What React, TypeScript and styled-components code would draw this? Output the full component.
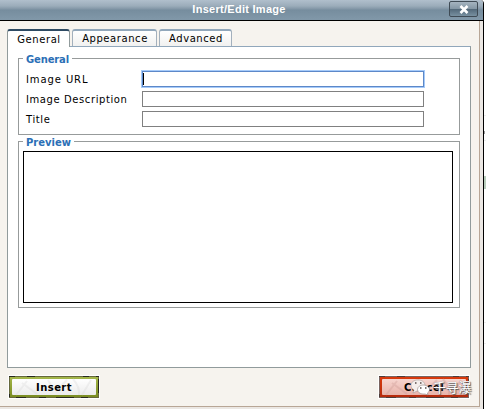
import React from 'react';
import styled, { createGlobalStyle } from 'styled-components';

const Global = createGlobalStyle`
  * { box-sizing: border-box; }
  body { margin: 0; background: #fff; overflow: hidden; }
`;

const Screen = styled.div`
  width: 486px;
  height: 409px;
  display: flex;
  background: #fff;
  overflow: hidden;
  font: 10px/12px 'DejaVu Sans', Verdana, sans-serif;
  color: #000;
`;

const Dialog = styled.div`
  width: 484px;
  height: 409px;
  display: flex;
  flex-direction: column;
  border-right: 1px solid #000;
  border-top-right-radius: 4px;
  background: #ebe7e3;
`;

const Outside = styled.div`
  width: 2px;
  height: 409px;
  background: linear-gradient(#eee, #eee) 0 115px / 2px 1px no-repeat,
    linear-gradient(#999, #999) 0 131px / 1px 3px no-repeat,
    linear-gradient(#eee, #eee) 0 140px / 2px 1px no-repeat,
    linear-gradient(#b9cdbc, #b9cdbc) 0 176px / 2px 13px no-repeat,
    linear-gradient(#eee, #eee) 0 322px / 2px 1px no-repeat,
    linear-gradient(#eee, #eee) 0 343px / 2px 1px no-repeat;
`;

const TitleBar = styled.header`
  height: 21px;
  flex: none;
  display: grid;
  grid-template-columns: 35px 1fr 35px;
  align-items: start;
  border-bottom: 1px solid #000;
  border-top-right-radius: 3px;
  background: linear-gradient(#b0bfcc 0, #9bacba 6px, #8296a6 9px, #768d9e 10px, #8097a8 19px);
`;

const Title = styled.h1`
  grid-column: 2;
  margin: 2px 0 0;
  padding-right: 5px;
  text-align: center;
  font: bold 11px/14px 'Liberation Sans', Arial, sans-serif;
  letter-spacing: 0.28px;
  color: #fff;
`;

const CloseButton = styled.button`
  width: 29px;
  height: 16px;
  margin: 1px 0 0 1px;
  padding: 0;
  display: flex;
  align-items: center;
  justify-content: center;
  border: 1px solid #3f4b55;
  border-radius: 2px;
  background: linear-gradient(#a5b4c0 0, #8497a5 48%, #53697a 52%, #7890a0 100%);
`;

const Body = styled.div`
  width: 480px;
  height: 386px;
  padding: 8px 8px 0 7px;
  border-right: 1px solid #b8a696;
  border-bottom: 1px solid #b8a696;
  background: #f6f3ee;
`;

const Tabs = styled.nav`
  display: flex;
  gap: 2px;
  height: 17px;
`;

const Tab = styled.button<{ $active?: boolean; $width: number }>`
  width: ${p => p.$width}px;
  height: ${p => (p.$active ? 18 : 17)}px;
  position: relative;
  z-index: 1;
  padding: 1px 0 0 1px;
  border: 1px solid ${p => (p.$active ? '#919b9c' : '#a3b0bd')};
  border-top: ${p => (p.$active ? '2px solid #2d4a63' : '2px solid #91a7bb')};
  border-bottom: 0;
  border-radius: 3px 3px 0 0;
  background: ${p => (p.$active ? '#fff' : 'linear-gradient(#fff, #f1f1f0)')};
  font: inherit;
  letter-spacing: 0.57px;
  text-align: center;
  color: #000;
`;

const Panel = styled.main`
  width: 464px;
  height: 322px;
  padding: 11px 10px 0;
  border: 1px solid #919b9c;
  border-top-color: #91a7bb;
  background: #fff;
`;

const Group = styled.section<{ $height: number }>`
  width: 442px;
  height: ${p => p.$height}px;
  border: 1px solid #979b9b;
  & + & { margin-top: 6px; }
`;

const Legend = styled.h2<{ $width: number; $spacing: number }>`
  width: ${p => p.$width}px;
  height: 12px;
  margin: -6px 0 0 4px;
  padding-left: 3px;
  background: #fff;
  font: bold 10px/13px 'DejaVu Sans', Verdana, sans-serif;
  letter-spacing: ${p => p.$spacing}px;
  white-space: nowrap;
  color: #2b6fb6;
`;

const Fields = styled.div`
  display: grid;
  gap: 4px;
  padding: 6px 0 0 7px;
`;

const Field = styled.label<{ $spacing: number }>`
  display: grid;
  grid-template-columns: 116px 282px;
  height: 16px;
  line-height: 17px;
  letter-spacing: ${p => p.$spacing}px;
  white-space: nowrap;
`;

const Input = styled.span<{ $focused?: boolean }>`
  display: block;
  height: 16px;
  padding: 1px 0 0 0;
  border: 1px solid ${p => (p.$focused ? '#5d88c8' : '#808080')};
  box-shadow: ${p => (p.$focused ? '0 0 0 1px #a6cbfa' : 'none')};
  background: #fff;
`;

const Caret = styled.i`
  display: block;
  width: 1px;
  height: 12px;
  background: #000;
`;

const Preview = styled.div`
  width: 430px;
  height: 152px;
  margin: 3px 0 0 4px;
  border: 1px solid #000;
`;

const Actions = styled.footer`
  width: 464px;
  padding: 7px 1px 0 1px;
  display: flex;
  justify-content: space-between;
`;

const Action = styled.button`
  position: relative;
  width: 92px;
  height: 24px;
  padding: 1px 0 0;
  display: flex;
  align-items: center;
  justify-content: center;
  border: 1px solid #fff;
  background: transparent;
  font: bold 10px/12px 'DejaVu Sans', Verdana, sans-serif;
  letter-spacing: 0.45px;
  color: #000;
`;

const Art = styled.svg`
  position: absolute;
  left: 0;
  top: 0;
`;

const Caption = styled.span`
  position: relative;
`;

const Watermark = styled.div`
  position: absolute;
  left: 32px;
  top: 2px;
  display: flex;
  gap: 3px;
  font: 13px/18px 'Noto Sans CJK SC', sans-serif;
  letter-spacing: -0.2px;
  color: #fff;
  white-space: nowrap;
  text-shadow: 1px 1px 1px #555, 0 0 1px #777;
`;

function ButtonArt({ red }: { red?: boolean }) {
  const id = red ? 'red' : 'green';
  return (
    <Art width="90" height="22" viewBox="0 0 90 22">
      <defs>
        <linearGradient id={id} x2="0" y2="1">
          <stop stopColor={red ? '#d93a0c' : '#a6b94c'} />
          <stop offset="1" stopColor={red ? '#b52a0c' : '#798b20'} />
        </linearGradient>
        <linearGradient id={id + 'Face'} x2="0" y2="1">
          <stop stopColor={red ? '#f7d5cf' : '#fff'} />
          <stop offset="1" stopColor={red ? '#e8b3aa' : '#ececec'} />
        </linearGradient>
      </defs>
      <rect x=".5" y=".5" width="89" height="21" fill={`url(#${id})`} stroke={red ? '#79635f' : '#66683d'} />
      <path d="M0 .5h6M18 .5h8M74 .5h6M87 .5h3M.5 18v3M7 21.5h10M30 21.5h7M47 21.5h18M72 21.5h7M89.5 3v14" stroke={red ? '#4e3c3a' : '#282820'} />
      <rect x="3" y="3" width="84" height="16" rx="1" fill={`url(#${id}Face)`} />
      <path d="M7 19L18 5M13 7l15 11M39 4l5 9M50 12l8-8M64 3q7 8 6 16M82 4l-9 15" fill="none" stroke={red ? '#cb9a94' : '#dadada'} strokeWidth="2" opacity=".35" />
    </Art>
  );
}

export default function App() {
  return (
    <>
      <Global />
      <Screen>
        <Dialog>
          <TitleBar>
            <Title>Insert/Edit Image</Title>
            <CloseButton aria-label="Close">
              <svg width="10" height="9" viewBox="0 0 10 9"><path d="M1.500 1L8.500 8M8.500 1L1.500 8" stroke="#fff" strokeWidth="2.600" /></svg>
            </CloseButton>
          </TitleBar>
          <Body>
            <Tabs>
              <Tab $active $width={63}>General</Tab>
              <Tab $width={85}>Appearance</Tab>
              <Tab $width={73}>Advanced</Tab>
            </Tabs>
            <Panel>
              <Group $height={77}>
                <Legend $width={49} $spacing={-0.15}>General</Legend>
                <Fields>
                  <Field $spacing={0.9}>Image URL<Input $focused><Caret /></Input></Field>
                  <Field $spacing={0.59}>Image Description<Input /></Field>
                  <Field $spacing={0.6}>Title<Input /></Field>
                </Fields>
              </Group>
              <Group $height={167}>
                <Legend $width={51} $spacing={0}>Preview</Legend>
                <Preview />
              </Group>
            </Panel>
            <Actions>
              <Action><ButtonArt /><Caption>Insert</Caption></Action>
              <Action>
                <ButtonArt red /><Caption>Cancel</Caption>
                <Watermark>
                  <svg width="19" height="18" viewBox="0 0 19 18">
                    <path d="M7 2C3 2 0 4 0 7.500c0 2 1 3.500 3 4.500l-1 3 4-2h2c4 0 6-2 6-5.500S11 2 7 2Z" fill="#f5eeec" stroke="#998f8c" strokeWidth=".5" />
                    <path d="M12 7c-3 0-5.500 2-5.500 4.500S9 16 12 16h2l3 1-.5-2c1-.8 2-2 2-3.500C18.500 9 15 7 12 7Z" fill="#fff" stroke="#8e8280" strokeWidth=".6" />
                    <path d="M4 5h1.500M9 5h1.500M9 10h1.500M14 10h1.500" stroke="#594d4b" strokeWidth="1.500" />
                  </svg>
                  <span>千寻瀑</span>
                </Watermark>
              </Action>
            </Actions>
          </Body>
        </Dialog>
        <Outside />
      </Screen>
    </>
  );
}
